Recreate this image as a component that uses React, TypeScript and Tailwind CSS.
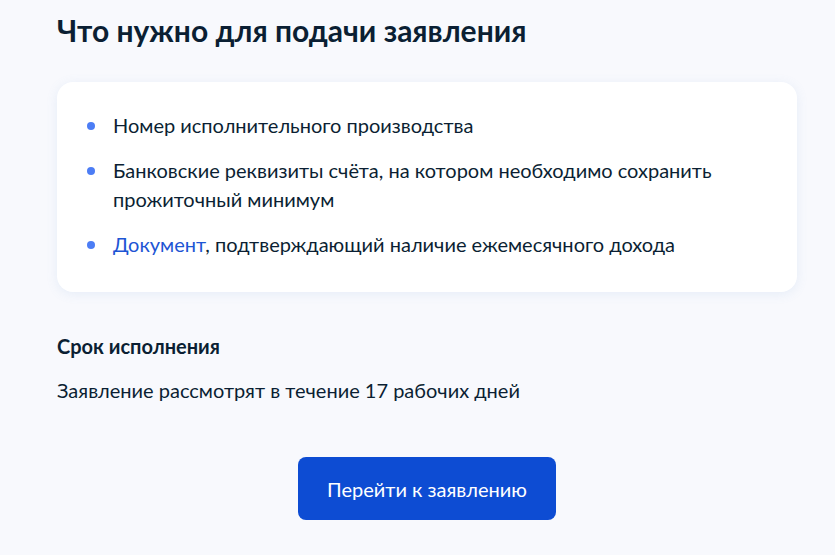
export default function App() {
  const items = [
    { link: null, text: 'Номер исполнительного производства' },
    {
      link: null,
      text: 'Банковские реквизиты счёта, на котором необходимо сохранить прожиточный минимум',
    },
    { link: 'Документ', text: ', подтверждающий наличие ежемесячного дохода' },
  ];

  return (
    <div
      className="min-h-[555px] w-full bg-[#f8f9fd] text-[#0b1f33]"
      style={{ fontFamily: 'Lato, "Noto Sans", sans-serif' }}
    >
      <div className="ml-[57px] flex w-[740px] flex-col pt-[12px]">
        <h1 className="text-[30px] font-bold leading-[36px]">Что нужно для подачи заявления</h1>

        {/* Card with the list */}
        <div className="mt-[34px] rounded-2xl bg-white px-[30px] pt-[29px] pb-[33px] shadow-[0_2px_12px_rgba(102,150,204,0.12)]">
          <ul className="flex flex-col gap-[16px]">
            {items.map((item, i) => (
              <li key={i} className="flex items-start text-[20px] leading-[29px]">
                <span className="mt-[10.5px] mr-[18px] h-[8px] w-[8px] shrink-0 rounded-full bg-[#4c7df5]"></span>
                <span className="max-w-[620px]">
                  {item.link && <a className="text-[#1d55d4]">{item.link}</a>}
                  {item.text}
                </span>
              </li>
            ))}
          </ul>
        </div>

        <h2 className="mt-[40px] text-[20px] font-bold leading-[28px]">Срок исполнения</h2>
        <p className="mt-[16px] text-[20px] leading-[28px]">Заявление рассмотрят в течение 17 рабочих дней</p>

        <div className="mt-[53px] flex justify-center">
          <button className="h-[63px] w-[258px] rounded-lg bg-[#0d4cd3] text-[20px] text-white">
            Перейти к заявлению
          </button>
        </div>
      </div>
    </div>
  );
}
